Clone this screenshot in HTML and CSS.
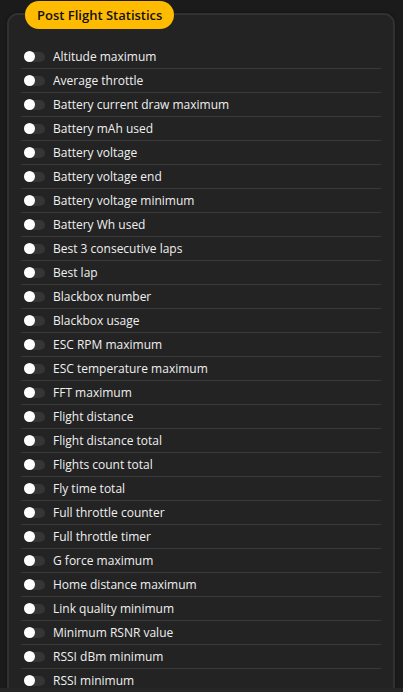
FILE: index.html
```html
<!DOCTYPE html>
<html>
<head>
<meta charset="utf-8">
<link rel="stylesheet" href="styles.css">
</head>
<body>
<div class="wrap">
  <div class="panel">
    <ul class="list">
      <li class="row"><span class="toggle"><span class="knob"></span></span><span class="label">Altitude maximum</span></li>
      <li class="row"><span class="toggle"><span class="knob"></span></span><span class="label">Average throttle</span></li>
      <li class="row"><span class="toggle"><span class="knob"></span></span><span class="label">Battery current draw maximum</span></li>
      <li class="row"><span class="toggle"><span class="knob"></span></span><span class="label">Battery mAh used</span></li>
      <li class="row"><span class="toggle"><span class="knob"></span></span><span class="label">Battery voltage</span></li>
      <li class="row"><span class="toggle"><span class="knob"></span></span><span class="label">Battery voltage end</span></li>
      <li class="row"><span class="toggle"><span class="knob"></span></span><span class="label">Battery voltage minimum</span></li>
      <li class="row"><span class="toggle"><span class="knob"></span></span><span class="label">Battery Wh used</span></li>
      <li class="row"><span class="toggle"><span class="knob"></span></span><span class="label">Best 3 consecutive laps</span></li>
      <li class="row"><span class="toggle"><span class="knob"></span></span><span class="label">Best lap</span></li>
      <li class="row"><span class="toggle"><span class="knob"></span></span><span class="label">Blackbox number</span></li>
      <li class="row"><span class="toggle"><span class="knob"></span></span><span class="label">Blackbox usage</span></li>
      <li class="row"><span class="toggle"><span class="knob"></span></span><span class="label">ESC RPM maximum</span></li>
      <li class="row"><span class="toggle"><span class="knob"></span></span><span class="label">ESC temperature maximum</span></li>
      <li class="row"><span class="toggle"><span class="knob"></span></span><span class="label">FFT maximum</span></li>
      <li class="row"><span class="toggle"><span class="knob"></span></span><span class="label">Flight distance</span></li>
      <li class="row"><span class="toggle"><span class="knob"></span></span><span class="label">Flight distance total</span></li>
      <li class="row"><span class="toggle"><span class="knob"></span></span><span class="label">Flights count total</span></li>
      <li class="row"><span class="toggle"><span class="knob"></span></span><span class="label">Fly time total</span></li>
      <li class="row"><span class="toggle"><span class="knob"></span></span><span class="label">Full throttle counter</span></li>
      <li class="row"><span class="toggle"><span class="knob"></span></span><span class="label">Full throttle timer</span></li>
      <li class="row"><span class="toggle"><span class="knob"></span></span><span class="label">G force maximum</span></li>
      <li class="row"><span class="toggle"><span class="knob"></span></span><span class="label">Home distance maximum</span></li>
      <li class="row"><span class="toggle"><span class="knob"></span></span><span class="label">Link quality minimum</span></li>
      <li class="row"><span class="toggle"><span class="knob"></span></span><span class="label">Minimum RSNR value</span></li>
      <li class="row"><span class="toggle"><span class="knob"></span></span><span class="label">RSSI dBm minimum</span></li>
      <li class="row"><span class="toggle"><span class="knob"></span></span><span class="label">RSSI minimum</span></li>
    </ul>
  </div>
  <div class="title">Post Flight Statistics</div>
</div>
<div class="bottom-bar"></div>
</body>
</html>
```
FILE: styles.css
```css
html, body {
  margin: 0;
  padding: 0;
  height: 100%;
  overflow: hidden;
}
body {
  background: #1b1b1b;
  font-family: "Open Sans", "Noto Sans", sans-serif;
  color: #f0f0f0;
}
.wrap {
  position: relative;
  padding: 13px 8px 0 7px;
}
.panel {
  background: #232323;
  border: 2px solid #313131;
  border-radius: 11px;
  padding: 30px 12px 0 12px;
  height: 800px;
  box-shadow: 0 0 3px rgba(0,0,0,0.4);
}
.title {
  position: absolute;
  left: 25px;
  top: 1px;
  height: 28px;
  line-height: 28px;
  padding: 0 12px;
  border-radius: 14px;
  background: #ffbb00;
  color: #111;
  font-size: 13px;
  font-weight: 600;
}
.list {
  list-style: none;
  margin: 0;
  padding: 0;
}
.row {
  display: flex;
  align-items: center;
  height: 23px;
  border-bottom: 1px solid #3a3a3a;
  font-size: 12px;
}
.toggle {
  width: 20px;
  height: 10px;
  border-radius: 5px;
  background: #353535;
  margin-left: 4px;
  margin-right: 8px;
  display: flex;
  align-items: center;
}
.knob {
  width: 11px;
  height: 11px;
  border-radius: 50%;
  background: #fff;
  margin-left: -1px;
}
.label {
  white-space: nowrap;
}
.bottom-bar {
  position: fixed;
  left: 0;
  right: 0;
  bottom: 0;
  height: 4px;
  background: #262626;
}
```
